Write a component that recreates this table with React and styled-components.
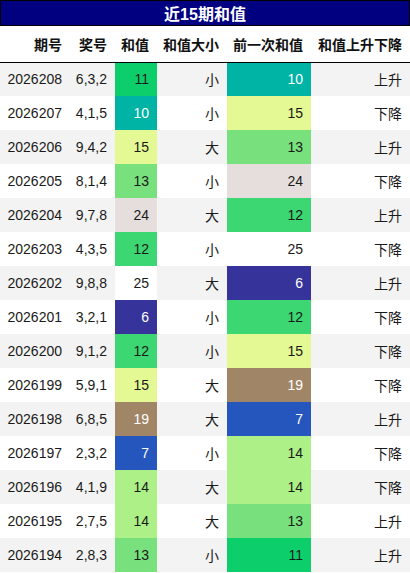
import React from "react";
import styled, { createGlobalStyle } from "styled-components";

const GlobalStyle = createGlobalStyle`
  body {
    margin: 0;
    background: #fff;
    font-family: "Liberation Sans", "Noto Sans CJK SC", sans-serif;
  }
`;

const Wrap = styled.div`
  width: 410px;
`;

const Title = styled.div`
  height: 24px;
  border: 1px solid #000;
  background: #000080;
  color: #fff;
  font-size: 16px;
  font-weight: bold;
  display: flex;
  align-items: center;
  justify-content: center;
`;

const Table = styled.table`
  width: 410px;
  border-collapse: collapse;
  table-layout: fixed;
  font-size: 14px;
  color: #1a1a1a;
`;

const HeadRow = styled.tr`
  height: 36px;
  background: #fff;
  border-bottom: 1px solid #000;
`;

const Th = styled.th`
  padding: 0 8px 0 0;
  text-align: right;
  font-weight: bold;
  color: #111;
  white-space: nowrap;
`;

const Row = styled.tr`
  height: 34px;
  background: ${p => (p.$odd ? "#f3f3f3" : "#fff")};
`;

const Td = styled.td`
  padding: 0 8px 0 0;
  text-align: right;
  white-space: nowrap;
  background: ${p => p.$bg || "transparent"};
  color: ${p => (p.$light ? "#fff" : "inherit")};
`;

const palette = {
  6: ["#36349b", true],
  7: ["#2456be", true],
  10: ["#00b4a5", true],
  11: ["#0ccf6c", false],
  12: ["#3cd672", false],
  13: ["#78e17d", false],
  14: ["#aef088", false],
  15: ["#e4f994", false],
  19: ["#a08666", true],
  24: ["#e6dedd", false],
  25: ["#ffffff", false]
};

const rows = [
  ["2026208", "6,3,2", 11, "小", 10, "上升"],
  ["2026207", "4,1,5", 10, "小", 15, "下降"],
  ["2026206", "9,4,2", 15, "大", 13, "上升"],
  ["2026205", "8,1,4", 13, "小", 24, "下降"],
  ["2026204", "9,7,8", 24, "大", 12, "上升"],
  ["2026203", "4,3,5", 12, "小", 25, "下降"],
  ["2026202", "9,8,8", 25, "大", 6, "上升"],
  ["2026201", "3,2,1", 6, "小", 12, "下降"],
  ["2026200", "9,1,2", 12, "小", 15, "下降"],
  ["2026199", "5,9,1", 15, "大", 19, "下降"],
  ["2026198", "6,8,5", 19, "大", 7, "上升"],
  ["2026197", "2,3,2", 7, "小", 14, "下降"],
  ["2026196", "4,1,9", 14, "大", 14, "下降"],
  ["2026195", "2,7,5", 14, "大", 13, "上升"],
  ["2026194", "2,8,3", 13, "小", 11, "上升"]
];

const widths = [70, 45, 42, 70, 84, 99];
const heads = ["期号", "奖号", "和值", "和值大小", "前一次和值", "和值上升下降"];

const SumCell = ({ value }) => {
  const [bg, light] = palette[value];
  return (
    <Td $bg={bg} $light={light}>
      {value}
    </Td>
  );
};

export default function App() {
  return (
    <Wrap>
      <GlobalStyle />
      <Title>近15期和值</Title>
      <Table>
        <colgroup>
          {widths.map((w, i) => (
            <col key={i} style={{ width: w }} />
          ))}
        </colgroup>
        <thead>
          <HeadRow>
            {heads.map(h => (
              <Th key={h}>{h}</Th>
            ))}
          </HeadRow>
        </thead>
        <tbody>
          {rows.map((r, i) => (
            <Row key={r[0]} $odd={i % 2 === 0}>
              <Td>{r[0]}</Td>
              <Td>{r[1]}</Td>
              <SumCell value={r[2]} />
              <Td>{r[3]}</Td>
              <SumCell value={r[4]} />
              <Td>{r[5]}</Td>
            </Row>
          ))}
        </tbody>
      </Table>
    </Wrap>
  );
}
